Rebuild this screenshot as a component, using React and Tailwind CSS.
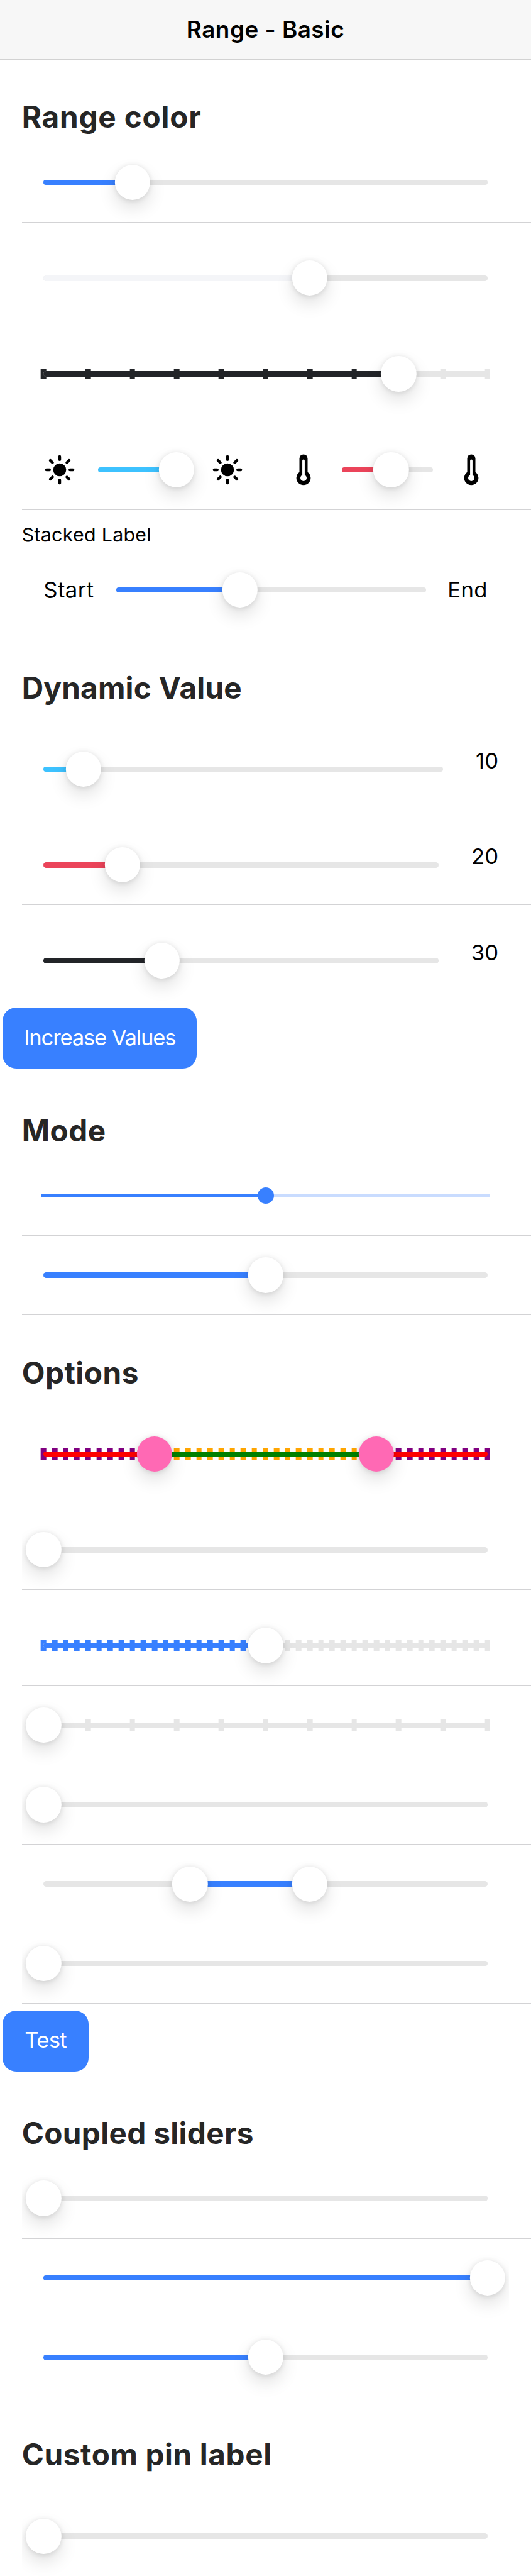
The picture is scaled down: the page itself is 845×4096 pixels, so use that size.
import React from "react";
import { IoSunny } from "react-icons/io5";

const KNOB_SHADOW = "shadow-[0_1.08px_8.67px_rgba(0,0,0,0.12),0_13px_28.17px_rgba(0,0,0,0.12)]";

function Thermometer() {
  return (
    <svg viewBox="0 0 512 512" className="size-[52px] shrink-0">
      <path d="M192 292V78a64 64 0 0 1 128 0v214a112 112 0 1 1-128 0z" fill="currentColor" />
      <path d="M256 112v272" stroke="#fff" strokeWidth="38" strokeLinecap="round" />
      <circle cx="256" cy="384" r="49" fill="#fff" />
    </svg>
  );
}

/* iOS style range: a track, optional ticks and one or two knobs */
function Range({
  value = 0,
  lower = null,
  steps = 0,
  active = "bg-[#3880ff]",
  track = "bg-[#e6e6e6]",
  tick = "bg-[#e6e6e6]",
  tickActive = active,
  knob = "bg-white",
}) {
  const from = lower ?? 0;
  const ticks = steps ? Array.from({ length: steps + 1 }, (_, i) => (i * 100) / steps) : [];
  return (
    <div className="relative h-[91px] min-w-0 flex-1">
      {ticks.map((t) => (
        <div
          key={t}
          className={`absolute top-[36.83px] h-[17.33px] w-[8.67px] -translate-x-1/2 ${
            t >= from && t <= value ? tickActive : tick
          }`}
          style={{ left: `${t}%` }}
        />
      ))}
      <div className={`absolute inset-x-0 top-[41.17px] h-[8.67px] rounded-[4.33px] ${track}`} />
      <div
        className={`absolute top-[41.17px] h-[8.67px] rounded-[4.33px] ${active}`}
        style={{ left: `${from}%`, width: `${value - from}%` }}
      />
      {(lower === null ? [value] : [lower, value]).map((v) => (
        <div
          key={v}
          className={`absolute top-[17.33px] size-[56.33px] -translate-x-1/2 rounded-full ${KNOB_SHADOW} ${knob}`}
          style={{ left: `${v}%` }}
        />
      ))}
    </div>
  );
}

/* Material style range: thin square track and a small knob */
function MaterialRange({ value }) {
  return (
    <div className="relative -mx-[4.33px] h-[91px] min-w-0 flex-1">
      <div className="absolute inset-x-0 top-[43.33px] h-[4.33px] bg-[#c9dcff]" />
      <div className="absolute left-0 top-[43.33px] h-[4.33px] bg-[#3880ff]" style={{ width: `${value}%` }} />
      <div
        className="absolute top-[32.5px] size-[26px] -translate-x-1/2 rounded-full bg-[#3880ff]"
        style={{ left: `${value}%` }}
      />
    </div>
  );
}

function Item({ tall = false, children }) {
  return (
    <div className={`ml-[34.67px] border-b border-[#d3d3d5] ${tall ? "h-[152.39px]" : "h-[126.39px]"}`}>
      <div className="mr-[34.67px] flex h-full items-end overflow-clip pb-[17.5px]">{children}</div>
    </div>
  );
}

function Padded({ children }) {
  return <div className="flex min-w-0 flex-1 items-center gap-[34.67px] px-[34.67px]">{children}</div>;
}

function Row({ tall, ...range }) {
  return (
    <Item tall={tall}>
      <Padded>
        <Range {...range} />
      </Padded>
    </Item>
  );
}

function ValueRow({ value, active }) {
  return (
    <Item tall>
      <Padded>
        <Range value={value} active={active} />
      </Padded>
      <span className="mx-[17.33px] mb-[38.4px] text-[34.67px] leading-[42px]">{value}</span>
    </Item>
  );
}

function Heading({ tracking = "tracking-[0.5px]", children }) {
  return (
    <h2
      className={`flex h-[132.17px] items-end pb-[15px] pl-[34.67px] text-[47.67px] font-bold leading-[52px] text-[#262626] ${tracking}`}
    >
      {children}
    </h2>
  );
}

function Button({ className, children }) {
  return (
    <div className="h-[114.83px] pl-[4.33px] pt-[10.83px]">
      <button
        className={`flex h-[96.6px] items-center justify-center rounded-[21.67px] bg-[#3880ff] pb-[4px] text-[34.67px] text-white ${className}`}
      >
        {children}
      </button>
    </div>
  );
}

export default function App() {
  return (
    <div className="h-[4096px] w-[845px] overflow-hidden bg-white font-['Inter',sans-serif] text-black">
      <header className="flex h-[95.33px] items-center justify-center border-b border-[#d2d2d2] bg-[#f7f7f7]">
        <h1 className="text-[36.83px] font-semibold leading-none tracking-[0.5px]">Range - Basic</h1>
      </header>

      <Heading tracking="tracking-[0.8px]">Range color</Heading>
      <Row value={20} />
      <Row tall value={60} active="bg-[#f4f5f8]" />
      <Row tall value={80} steps={10} active="bg-[#222428]" />
      <Item tall>
        <Padded>
          <IoSunny className="size-[52px] shrink-0" />
          <Range value={86} active="bg-[#3dc2ff]" />
          <IoSunny className="size-[52px] shrink-0" />
        </Padded>
        <Padded>
          <Thermometer />
          <Range value={54} active="bg-[#eb445a]" />
          <Thermometer />
        </Padded>
      </Item>
      <div className="ml-[34.67px] h-[191.39px] border-b border-[#d3d3d5]">
        <div className="mr-[34.67px] flex h-full flex-col justify-between overflow-clip pb-[18px] pt-[21px]">
          <span className="text-[30.33px] leading-[36px] tracking-[0.3px]">Stacked Label</span>
          <div className="flex text-[34.67px]">
            <Padded>
              <span className="w-[80.6px] pb-[2px] tracking-[0.4px]">Start</span>
              <Range value={40} />
              <span className="w-[63.5px] pb-[2px] tracking-[0.4px]">End</span>
            </Padded>
          </div>
        </div>
      </div>

      <Heading tracking="tracking-[0.2px]">Dynamic Value</Heading>
      <ValueRow value={10} active="bg-[#3dc2ff]" />
      <ValueRow value={20} active="bg-[#eb445a]" />
      <ValueRow value={30} active="bg-[#222428]" />
      <Button className="w-[309px] tracking-[-0.035em]">Increase Values</Button>

      <Heading>Mode</Heading>
      <Item>
        <Padded>
          <MaterialRange value={50} />
        </Padded>
      </Item>
      <Row value={50} />

      <Heading>Options</Heading>
      <Row
        tall
        lower={25}
        value={75}
        steps={40}
        active="bg-[#008000]"
        track="bg-[#ff0000]"
        tick="bg-[#800080]"
        tickActive="bg-[#ffa500]"
        knob="bg-[#ff69b4]"
      />
      <Row tall />
      <Row tall value={50} steps={40} />
      <Row steps={10} />
      <Row />
      <Row lower={33} value={60} />
      <Row />
      <Button className="w-[136.5px] tracking-[-0.02em]">Test</Button>

      <Heading tracking="tracking-[0.35px]">Coupled sliders</Heading>
      <Row />
      <Row value={100} />
      <Row value={50} />

      <Heading tracking="tracking-[0.6px]">Custom pin label</Heading>
      <Row tall />
    </div>
  );
}
